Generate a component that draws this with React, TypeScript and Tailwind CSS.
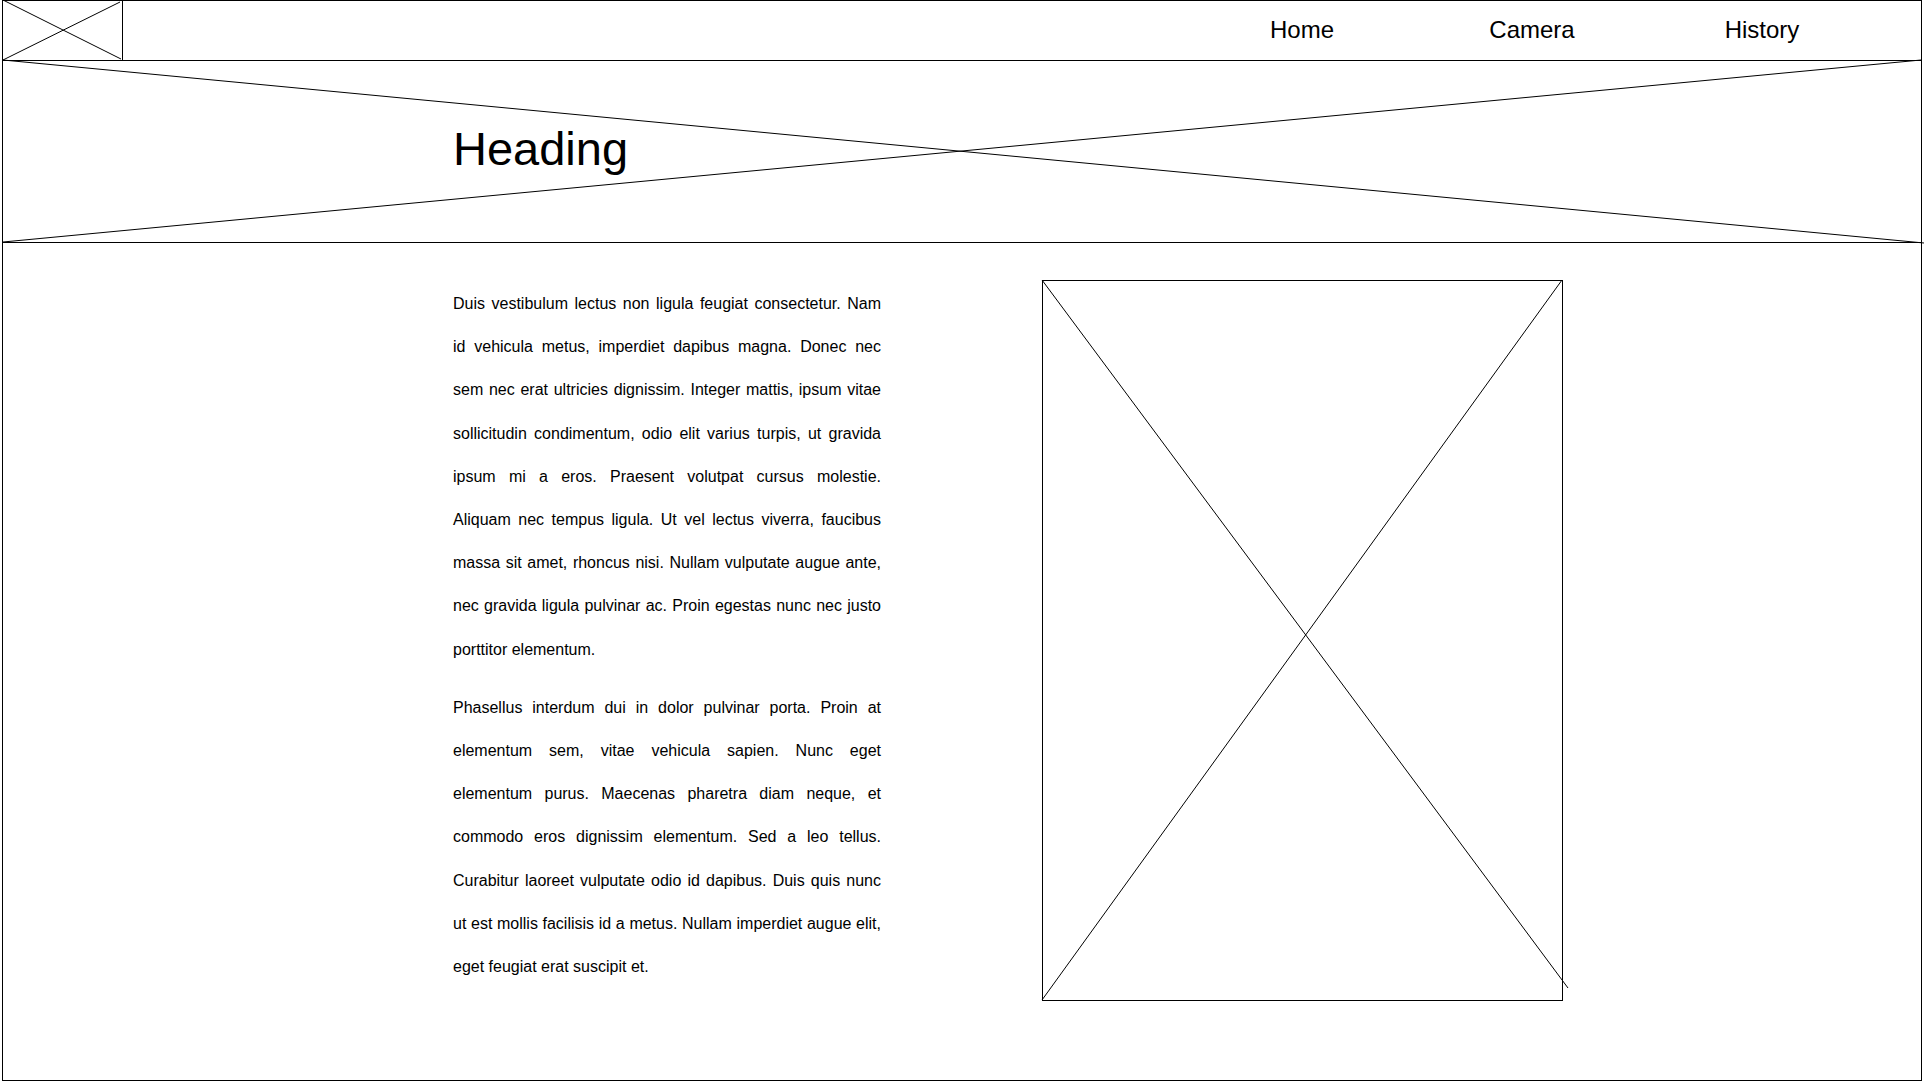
const font = "font-['Liberation_Sans',Arial,sans-serif]"

const navItems = ["Home", "Camera", "History"]

// lines as broken in the mockup
const paragraphs = [
  [
    "Duis vestibulum lectus non ligula feugiat consectetur. Nam",
    "id vehicula metus, imperdiet dapibus magna. Donec nec",
    "sem nec erat ultricies dignissim. Integer mattis, ipsum vitae",
    "sollicitudin condimentum, odio elit varius turpis, ut gravida",
    "ipsum mi a eros. Praesent volutpat cursus molestie.",
    "Aliquam nec tempus ligula. Ut vel lectus viverra, faucibus",
    "massa sit amet, rhoncus nisi. Nullam vulputate augue ante,",
    "nec gravida ligula pulvinar ac. Proin egestas nunc nec justo",
    "porttitor elementum.",
  ],
  [
    "Phasellus interdum dui in dolor pulvinar porta. Proin at",
    "elementum sem, vitae vehicula sapien. Nunc eget",
    "elementum purus. Maecenas pharetra diam neque, et",
    "commodo eros dignissim elementum. Sed a leo tellus.",
    "Curabitur laoreet vulputate odio id dapibus. Duis quis nunc",
    "ut est mollis facilisis id a metus. Nullam imperdiet augue elit,",
    "eget feugiat erat suscipit et.",
  ],
]

export default function App() {
  return (
    <div className={`min-h-[1081px] w-[1927px] bg-white text-black ${font}`}>
      <div className="ml-[2px] flex h-[1081px] w-[1920px] flex-col border border-black">
        {/* Header */}
        <header className="flex h-[60px] shrink-0 items-center justify-between border-b border-black">
          <div className="relative h-full w-[120px] border-r border-black">
            <svg className="absolute inset-0 h-full w-full">
              <line x1="0" y1="-1" x2="118" y2="58" stroke="#000" strokeWidth="1" />
              <line x1="0" y1="59" x2="117" y2="1" stroke="#000" strokeWidth="1" />
            </svg>
          </div>
          <nav className="mr-[44px] -mt-[2px] flex">
            {navItems.map((item) => (
              <a key={item} className="w-[230px] text-center text-[24px]">
                {item}
              </a>
            ))}
          </nav>
        </header>

        {/* Hero */}
        <section className="relative h-[182px] shrink-0 border-b border-black pl-[450px] pt-[64px]">
          <svg className="pointer-events-none absolute inset-0 h-full w-full overflow-visible">
            <line x1="0" y1="-1" x2="1921" y2="182" stroke="#000" strokeWidth="1" />
            <line x1="0" y1="181" x2="1918" y2="-1" stroke="#000" strokeWidth="1" />
          </svg>
          <h1 className="relative text-[47px] leading-none font-normal">Heading</h1>
        </section>

        {/* Content */}
        <main className="flex gap-[161px] pl-[450px] pt-[37px]">
          <div className="mt-[2px] flex w-[428px] flex-col gap-[15px]">
            {paragraphs.map((lines, i) => (
              <p key={i} className="text-[16px] leading-[43.2px]">
                {lines.map((line, j) => (
                  <span
                    key={j}
                    className={
                      j < lines.length - 1
                        ? "block text-justify [text-align-last:justify]"
                        : "block"
                    }
                  >
                    {line}
                  </span>
                ))}
              </p>
            ))}
          </div>
          <div className="relative h-[721px] w-[521px] border border-black">
            <svg className="pointer-events-none absolute inset-0 h-full w-full overflow-visible">
              <line x1="-1" y1="-1" x2="525" y2="707" stroke="#000" strokeWidth="1" />
              <line x1="-1" y1="719" x2="519" y2="-1" stroke="#000" strokeWidth="1" />
            </svg>
          </div>
        </main>
      </div>
    </div>
  )
}
